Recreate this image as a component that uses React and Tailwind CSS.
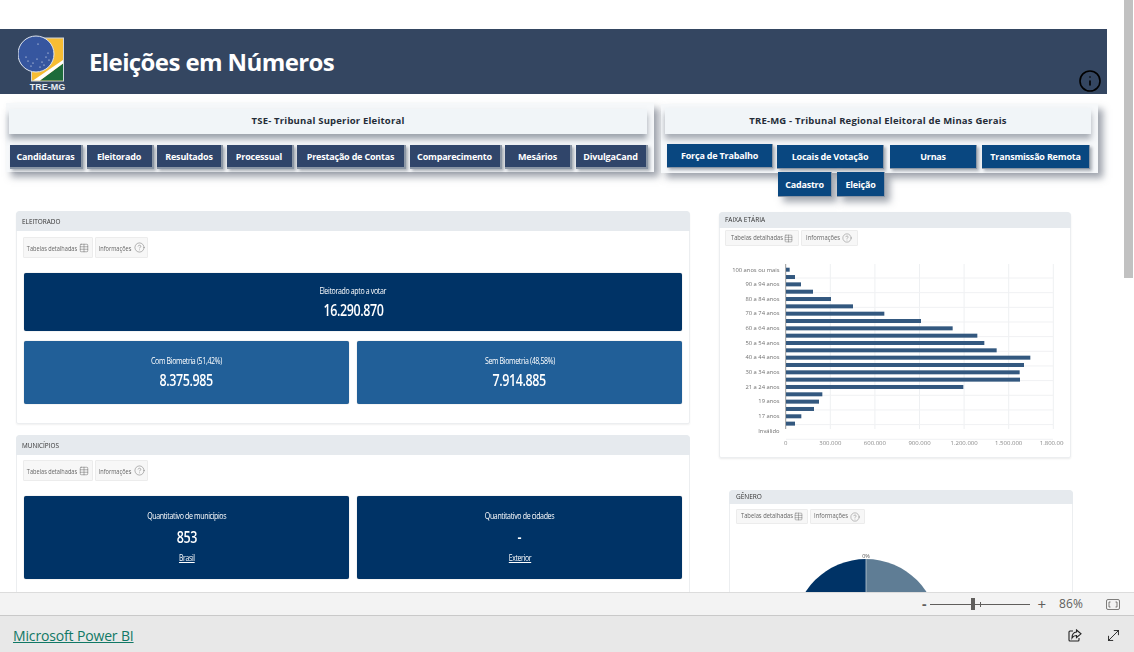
import React from "react";
import { Info, MoveDiagonal, Table, CircleHelp } from "lucide-react";

const bars = [238,254,272,308,362,428,522,632,727,801,822,859,960,941,928,929,759,336,326,311,273,254];
const yLabels = [["100 anos ou mais",0],["90 a 94 anos",2],["80 a 84 anos",4],["70 a 74 anos",6],["60 a 64 anos",8],["50 a 54 anos",10],["40 a 44 anos",12],["30 a 34 anos",14],["21 a 24 anos",16],["19 anos",18],["17 anos",20],["Inválido",22]];
const xLabels = ["0","300.000","600.000","900.000","1.200.000","1.500.000","1.800.000"];

function Logo() {
  return (
    <svg width="50" height="62" viewBox="0 0 50 62" className="block">
      <rect x="13.5" y="7" width="32" height="43" fill="#f7bd33" stroke="#cfd6de" strokeWidth="1" />
      <path d="M22 49.5 L45 32.5 L45 49.5 Z" fill="#1d6b3a" />
      <path d="M15 49.5 L45 29 L45 32.5 L22 49.5 Z" fill="#ffffff" />
      <circle cx="18" cy="23" r="18" fill="#36569f" stroke="#dfe5ee" strokeWidth="1" />
      {[[20,13],[10,30],[15,32],[19,28],[24,31],[28,26],[30,22],[8,26],[22,36],[26,34],[13,35],[31,29]].map(([x,y],i)=>(
        <circle key={i} cx={x} cy={y} r="0.6" fill="#fff" />
      ))}
      <text x="29.5" y="58.5" textAnchor="middle" fontSize="9" fontWeight="700" fill="#e8edf3" fontFamily="Liberation Sans, sans-serif">TRE-MG</text>
    </svg>
  );
}

function NavBtn({ w, children, blue, className = "" }) {
  return (
    <div className={`${w} ${blue ? "bg-[#094780] border-r border-b border-[#8b96a5]" : "bg-[#30456a] border-r-2 border-b-2 border-[#8b96a5]"} h-[24px] pt-px flex items-center justify-center text-white text-[9px] font-bold font-['Open_Sans',sans-serif] whitespace-nowrap tracking-[-0.2px] shadow-[2px_2px_3px_rgba(70,80,95,.45)] ${className}`}>
      {children}
    </div>
  );
}

function MiniBtn({ w, h, small, tw, children, icon }) {
  return (
    <div className={`${w} ${h} bg-[#f7f7f7] border border-[#ececec] rounded-[1px] flex items-center justify-center gap-[2px] ${small ? "text-[7px]" : "text-[8px]"} text-[#666] font-['Open_Sans',sans-serif]`}>
      <span className={`${tw} flex justify-center whitespace-nowrap ${small ? "scale-x-[.83]" : "scale-x-[.7]"}`}><span>{children}</span></span>
      {icon}
    </div>
  );
}

function Tools({ small, w1, w2, h }) {
  const s = small ? 9 : 10;
  return (
    <div className="flex gap-[2px]">
      <MiniBtn w={w1} h={h} small={small} tw="w-[50px]" icon={<Table size={s} strokeWidth={1.2} className="shrink-0" />}>Tabelas detalhadas</MiniBtn>
      <MiniBtn w={w2} h={h} small={small} tw="w-[32px]" icon={<CircleHelp size={s + 1} strokeWidth={1} className="shrink-0 ml-px" />}>Informações</MiniBtn>
    </div>
  );
}

function Stat({ title, value, sub, className }) {
  return (
    <div className={`${className} rounded-[2px] text-white flex flex-col items-center justify-center font-['Open_Sans',sans-serif] shadow-[0_0_1px_rgba(0,0,0,.4)] ${sub ? "pb-[3px]" : ""}`}>
      <div className="text-[9px] leading-[12px] tracking-[-0.45px] whitespace-nowrap scale-x-[.78]">{title}</div>
      <div className={`text-[16px] leading-[20px] font-semibold tracking-[-0.5px] scale-x-[.78] ${sub ? "mt-[5px]" : "mt-[3px]"}`}>{value}</div>
      {sub && <div className="text-[8.5px] leading-[11px] mt-[5px] underline tracking-[-0.4px] scale-x-[.8]">{sub}</div>}
    </div>
  );
}

function AgeChart() {
  return (
    <svg width="345" height="200" viewBox="0 0 345 200" className="block mt-[7px] -ml-[1px]">
      {[0,1,2,3,4,5,6].map(i => (
        <line key={i} x1={66.7 + i * 44.6} x2={66.7 + i * 44.6} y1="11" y2="176" stroke={i ? "#eef0f2" : "#999"} strokeWidth="1" />
      ))}
      {Array.from({ length: 12 }).map((_, i) => (
        <line key={i} x1="67" x2="334" y1={25 + i * 14.66} y2={25 + i * 14.66} stroke="#f0f1f3" strokeWidth="1" />
      ))}
      {bars.map((b, i) => (
        <rect key={i} x="67" y={14.7 + i * 7.33} width={(b - 227) / 3} height="4" fill="#33587f" />
      ))}
      {yLabels.map(([t, i]) => (
        <text key={t} x="60.5" y={18.5 + i * 7.33} textAnchor="end" fontSize="5.8" fill="#6f6f6f" fontFamily="Open Sans, sans-serif">{t}</text>
      ))}
      {xLabels.map((t, i) => (
        <text key={t} x={66.7 + i * 44.6} y="192" textAnchor="middle" fontSize="6" fill="#8a8a8a" fontFamily="Open Sans, sans-serif">{t}</text>
      ))}
    </svg>
  );
}

function CardHead({ h, size, pl, children, squeeze }) {
  return (
    <div className={`${h} -m-[1px] mb-0 rounded-t-[4px] bg-[#e6eaee] flex items-center ${pl} ${size} text-[#333]`}>
      <span className={squeeze ? "origin-left scale-x-[.8] whitespace-nowrap" : "whitespace-nowrap"}>{children}</span>
    </div>
  );
}

export default function App() {
  return (
    <div className="w-[1134px] h-[652px] overflow-hidden bg-white flex flex-col font-['Open_Sans',sans-serif]">
      <div className="h-[592px] flex overflow-hidden shrink-0">
        <div className="w-[1107px] shrink-0 pt-[29px]">
          <header className="h-[65px] bg-[#344661] flex items-center pl-[18px] pr-[5px]">
            <Logo />
            <h1 className="ml-[21px] text-white text-[24px] font-bold tracking-[-0.6px] whitespace-nowrap">Eleições em Números</h1>
            <Info size={24} strokeWidth={1.6} className="ml-auto self-end mb-px text-black" />
          </header>

          <div className="flex pt-[9px] pl-[6px] gap-[7px] items-start">
            <section className="w-[648px] h-[69px] bg-[#f6f8fa] shadow-[5px_5px_7px_rgba(80,90,105,.55)] pt-[6px] pl-[3px]">
              <div className="w-[638px] h-[25px] bg-[#f1f5f8] shadow-[0_5px_6px_rgba(70,80,95,.5)] flex items-center justify-center text-[9.5px] font-bold text-[#252d38] tracking-[0.2px]">TSE- Tribunal Superior Eleitoral</div>
              <div className="flex gap-[3.5px] mt-[11px] ml-[1px]">
                <NavBtn w="w-[73px]">Candidaturas</NavBtn>
                <NavBtn w="w-[67px]">Eleitorado</NavBtn>
                <NavBtn w="w-[66px]">Resultados</NavBtn>
                <NavBtn w="w-[67px]">Processual</NavBtn>
                <NavBtn w="w-[109px]">Prestação de Contas</NavBtn>
                <NavBtn w="w-[92px]">Comparecimento</NavBtn>
                <NavBtn w="w-[67px]">Mesários</NavBtn>
                <NavBtn w="w-[72px]">DivulgaCand</NavBtn>
              </div>
            </section>
            <div className="flex flex-col mt-[1px]">
              <section className="w-[437px] h-[69px] bg-[#f6f8fa] shadow-[5px_5px_7px_rgba(80,90,105,.55)] pt-[4px] pl-[4px]">
                <div className="w-[426px] h-[26px] bg-[#f1f5f8] shadow-[0_5px_6px_rgba(70,80,95,.45)] flex items-center justify-center text-[9.5px] font-bold text-[#252d38] tracking-[0.2px]">TRE-MG - Tribunal Regional Eleitoral de Minas Gerais</div>
                <div className="flex mt-[10px] ml-[2px] items-start">
                  <NavBtn w="w-[106px]" blue>Força de Trabalho</NavBtn>
                  <NavBtn w="w-[107px]" blue className="ml-[4px] mt-[1px]">Locais de Votação</NavBtn>
                  <NavBtn w="w-[87px]" blue className="ml-[6px] mt-[1px]">Urnas</NavBtn>
                  <NavBtn w="w-[108px]" blue className="ml-[5px] mt-[1px]">Transmissão Remota</NavBtn>
                </div>
              </section>
              <div className="flex ml-[117px] gap-[5px] -mt-[1px]">
                <NavBtn w="w-[54px]" blue className="h-[25px] shadow-[5px_5px_7px_rgba(70,80,95,.5)]">Cadastro</NavBtn>
                <NavBtn w="w-[48px]" blue className="h-[25px] shadow-[5px_5px_7px_rgba(70,80,95,.5)]">Eleição</NavBtn>
              </div>
            </div>
          </div>

          <div className="flex pl-[16px] mt-[14px] items-start">
            <div className="w-[674px] shrink-0 flex flex-col gap-[11px] blur-[0.2px]">
              <section className="h-[213px] rounded-t-[4px] rounded-b-[2px] border border-[#eceef0] shadow-[0_1px_2px_rgba(0,0,0,.06)] bg-white">
                <CardHead h="h-[20px]" size="text-[8px]" pl="pl-[6px]" squeeze>ELEITORADO</CardHead>
                <div className="pl-[6px] pt-[6px]"><Tools w1="w-[70px]" w2="w-[53px]" h="h-[21px]" /></div>
                <div className="px-[7px] pt-[15px] flex flex-col gap-[10px]">
                  <Stat className="h-[58px] bg-[#003366]" title="Eleitorado apto a votar" value="16.290.870" />
                  <div className="grid grid-cols-2 gap-[8px]">
                    <Stat className="h-[63px] bg-[#215f98]" title="Com Biometria (51,42%)" value="8.375.985" />
                    <Stat className="h-[63px] bg-[#215f98]" title="Sem Biometria (48,58%)" value="7.914.885" />
                  </div>
                </div>
              </section>
              <section className="h-[213px] rounded-t-[4px] border border-[#eceef0] bg-white">
                <CardHead h="h-[20px]" size="text-[8px]" pl="pl-[6px]" squeeze>MUNICÍPIOS</CardHead>
                <div className="pl-[6px] pt-[5px]"><Tools w1="w-[70px]" w2="w-[53px]" h="h-[21px]" /></div>
                <div className="px-[7px] pt-[15px]">
                  <div className="grid grid-cols-2 gap-[8px]">
                    <Stat className="h-[83px] bg-[#003366]" title="Quantitativo de municípios" value="853" sub="Brasil" />
                    <Stat className="h-[83px] bg-[#003366]" title="Quantitativo de cidades" value="-" sub="Exterior" />
                  </div>
                </div>
              </section>
            </div>

            <div className="flex flex-col ml-[29px] blur-[0.3px]">
              <section className="w-[352px] h-[246px] mt-[1px] rounded-t-[4px] rounded-b-[2px] border border-[#eceef0] shadow-[0_1px_2px_rgba(0,0,0,.08)] bg-white">
                <CardHead h="h-[16px]" size="text-[6.5px]" pl="pl-[6px]">FAIXA ETÁRIA</CardHead>
                <div className="pl-[5px] pt-[2px]"><Tools small w1="w-[74px]" w2="w-[57px]" h="h-[16px]" /></div>
                <AgeChart />
              </section>
              <section className="w-[344px] h-[120px] ml-[10px] mt-[32px] rounded-t-[4px] border border-[#eceef0] bg-white">
                <CardHead h="h-[14px]" size="text-[6.5px]" pl="pl-[7px]">GÊNERO</CardHead>
                <div className="pl-[6px] pt-[5px]"><Tools small w1="w-[72px]" w2="w-[55px]" h="h-[15px]" /></div>
                <svg width="342" height="90" viewBox="0 0 342 90" className="block -mt-px">
                  <text x="136" y="35" textAnchor="middle" fontSize="5.5" fill="#555" fontFamily="Open Sans, sans-serif">0%</text>
                  <path d="M136 36 A72 72 0 0 1 208 108 L136 108 Z" fill="#5f7d95" />
                  <path d="M136 36 A72 72 0 0 0 64 108 L136 108 Z" fill="#003366" />
                  <line x1="136" x2="136" y1="36" y2="90" stroke="#cfd8e0" strokeWidth="0.7" />
                </svg>
              </section>
            </div>
          </div>
        </div>
        <div className="flex-1 flex justify-end">
          <div className="w-[9px] mr-px h-[278px] bg-[#c1c1c1]" />
        </div>
      </div>

      <div className="h-[23px] shrink-0 bg-[#f3f3f3] border-t border-[#dcdcdc] flex items-center justify-end pr-[14px] text-[#605e5c]">
        <span className="text-[14px] font-bold leading-none mr-[4px]">-</span>
        <div className="w-[100px] h-px bg-[#605e5c] relative flex items-center mr-[2px]">
          <div className="absolute left-[41px] w-[4px] h-[12px] bg-[#605e5c]" />
          <div className="absolute left-[50px] w-px h-[5px] bg-[#605e5c]" />
        </div>
        <span className="text-[15px] leading-none ml-[5px]">+</span>
        <span className="text-[12px] ml-[13px] w-[34px] tracking-[0.1px]">86%</span>
        <svg width="14" height="11" viewBox="0 0 14 11" fill="none" stroke="#605e5c" strokeWidth="0.8" className="ml-[13px]">
          <rect x="0.5" y="0.5" width="13" height="10" rx="1.5" />
          <path d="M4.5 3H3v5h1.5M9.5 3H11v5H9.5" />
        </svg>
      </div>

      <footer className="flex-1 bg-[#e8e8e8] border-t border-[#c9c9c9] flex items-center pl-[13px] pr-[14px] pt-[3px]">
        <a className="text-[14px] tracking-[-0.15px] text-[#117865] underline font-['Open_Sans',sans-serif]">Microsoft Power BI</a>
        <svg width="14" height="13" viewBox="0 0 14 13" fill="none" stroke="#222" strokeWidth="1.1" className="ml-auto">
          <path d="M5 2H2a1 1 0 0 0-1 1v8a1 1 0 0 0 1 1h8a1 1 0 0 0 1-1V9" />
          <path d="M8.5 1 13 4.8 8.5 8.5V6.5C6.5 6.5 5 7.3 4 9c0-3 1.5-5.7 4.5-6Z" />
        </svg>
        <MoveDiagonal size={17} strokeWidth={1.2} className="ml-[23px] -mr-[2px] text-[#111]" />
      </footer>
    </div>
  );
}
